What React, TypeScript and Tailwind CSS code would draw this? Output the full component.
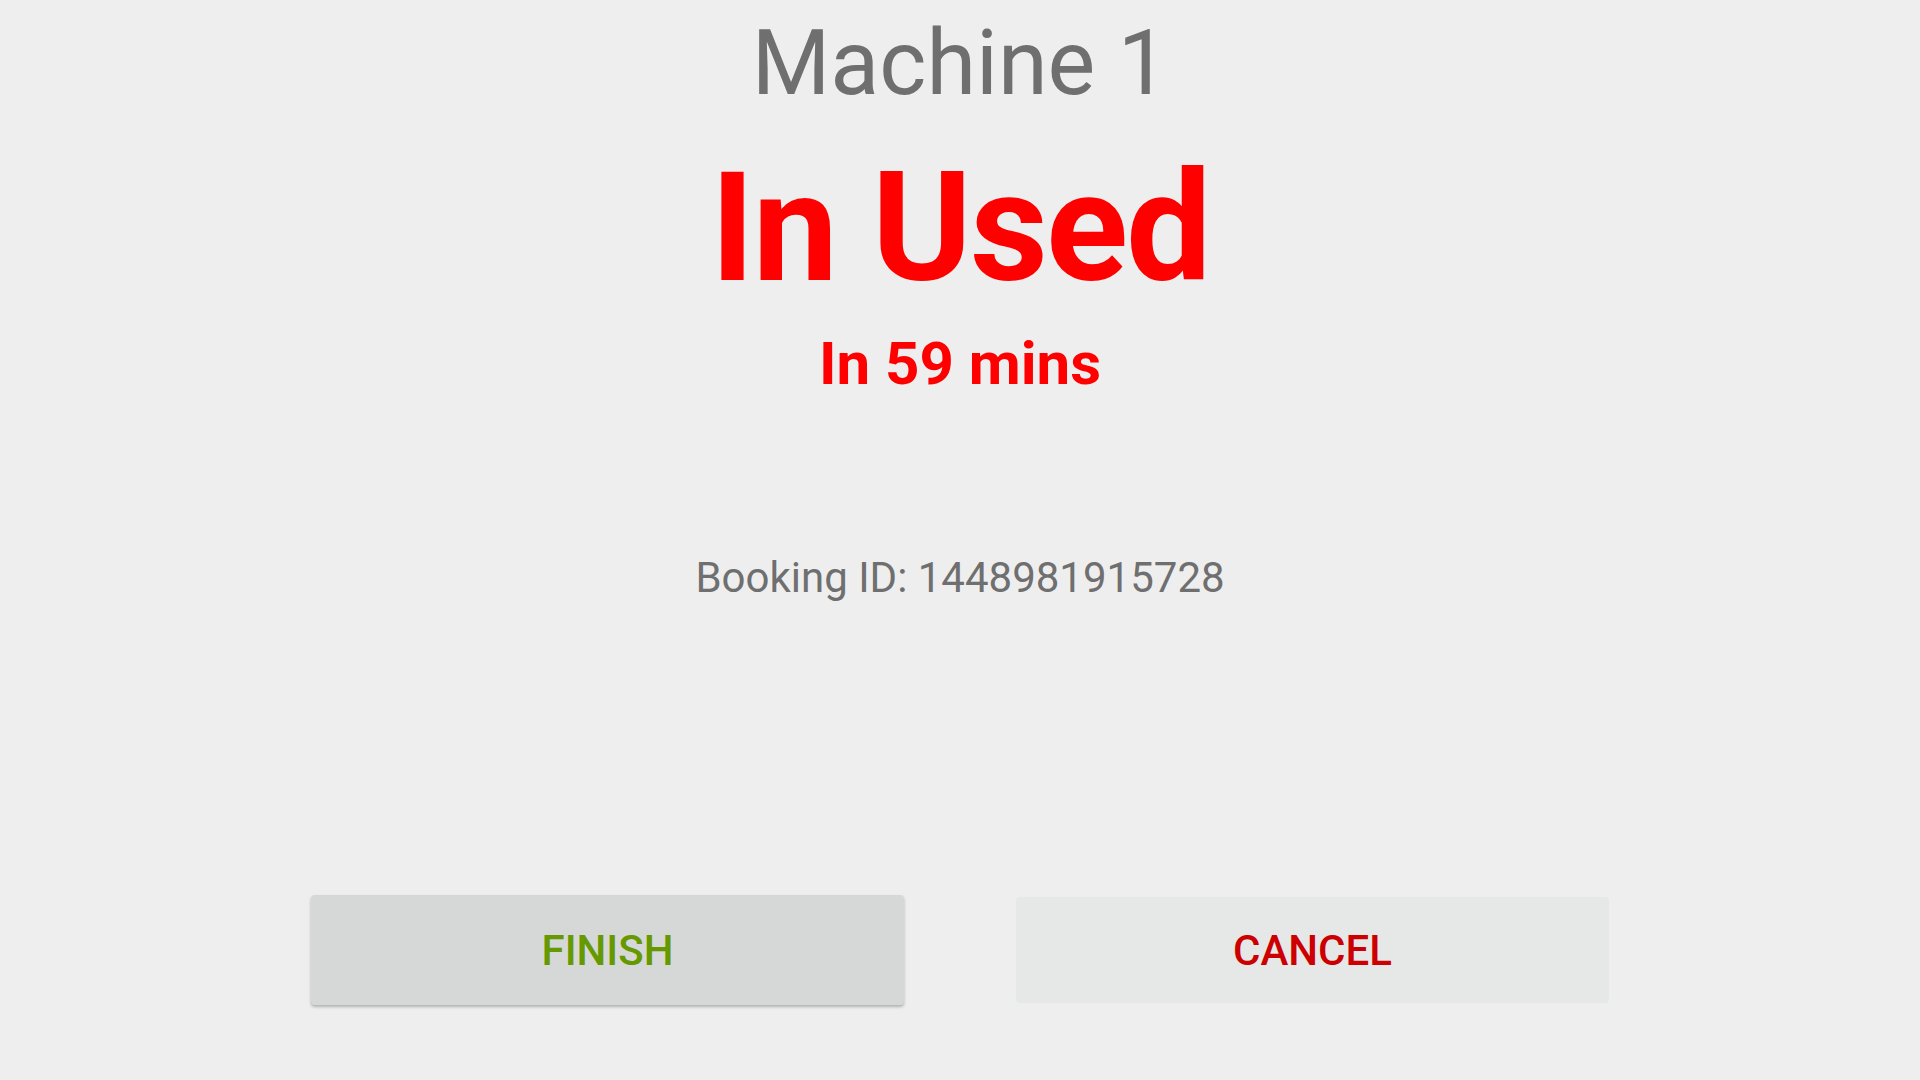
import React from "react";

export default function App() {
  return (
    <div className="flex h-[1080px] w-[1920px] flex-col items-center bg-[#eeeeee] pt-[19px] font-['Roboto',sans-serif]">
      <h1 className="text-[90px] font-normal leading-none text-[#6f6f6f]">Machine 1</h1>
      <p className="mt-[43px] text-[152px] font-bold leading-none tracking-[-2px] text-[#ff0000]">In Used</p>
      <p className="mt-[30px] text-[60px] font-bold leading-none text-[#ff0000]">In 59 mins</p>
      <p className="mt-[163px] text-[42px] leading-none text-[#6f6f6f]">Booking ID: 1448981915728</p>
      <div className="mt-[296px] flex w-full items-start gap-[112px] px-[311px]">
        <button className="flex h-[110px] flex-1 items-center justify-center rounded-[4px] bg-[#d6d7d7] text-[42px] font-medium text-[#669900] shadow-[0_2px_3px_rgba(0,0,0,0.25)]">
          FINISH
        </button>
        <button className="mt-[2px] flex h-[106px] flex-1 items-center justify-center rounded-[4px] bg-[#e6e7e7] text-[42px] font-medium text-[#cc0000]">
          CANCEL
        </button>
      </div>
    </div>
  );
}
